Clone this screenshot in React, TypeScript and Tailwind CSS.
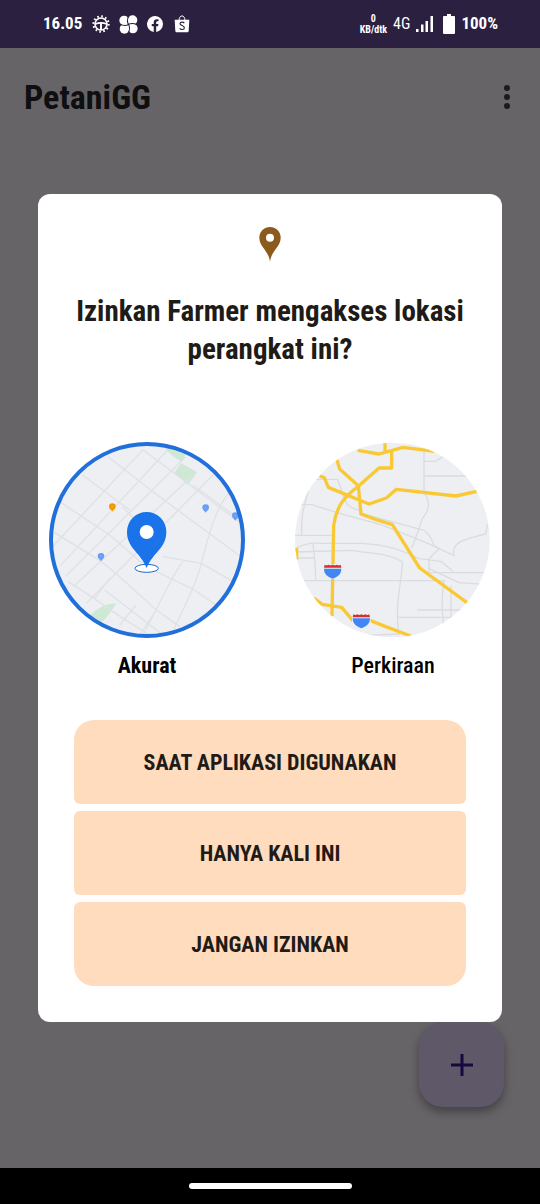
import { useState } from "react";

function GearIcon() {
  return (
    <svg viewBox="0 0 54 54" className="size-[18px]" fill="none" stroke="#fff" aria-hidden="true">
      <circle cx="27" cy="27" r="23" strokeWidth="6" strokeDasharray="5 7.040" />
      <circle cx="27" cy="27" r="18" strokeWidth="5" />
      <path d="M10 27q17-7 34 0" strokeWidth="5" />
      <path d="M27 25v20" strokeWidth="6" />
    </svg>
  );
}

function PinwheelIcon() {
  return (
    <svg viewBox="0 0 56 56" className="size-[19px]" aria-hidden="true">
      <g fill="#fff">
        <circle cx="15" cy="16" r="14" />
        <circle cx="40" cy="15" r="14" />
        <circle cx="41" cy="40" r="14" />
        <circle cx="16" cy="41" r="14" />
        <path d="M14 14h28v28H14z" />
      </g>
      <path
        d="M28 28C24 22 24 12 29 1M28 28C34 24 44 24 55 29M28 28C32 34 32 44 27 55M28 28C22 32 12 32 1 27"
        fill="none"
        stroke="#2b2040"
        strokeWidth="3"
      />
    </svg>
  );
}

function FacebookIcon() {
  return (
    <svg viewBox="0 0 24 24" className="size-4" fill="#fff" aria-hidden="true">
      <path d="M24 12a12 12 0 1 0-13.9 11.9v-8.4h-3V12h3V9.400c0-3 1.800-4.700 4.500-4.700 1.300 0 2.700.2 2.700.2v3h-1.500c-1.500 0-2 .9-2 1.900V12h3.400l-.6 3.500h-2.800v8.400A12 12 0 0 0 24 12Z" />
    </svg>
  );
}

function ShopIcon() {
  return (
    <svg viewBox="0 0 48 54" className="h-[18px] w-4" aria-hidden="true">
      <path d="M15 17c0-19 18-19 18 0" fill="none" stroke="#fff" strokeWidth="3" />
      <path d="M2 14h44l-2 34q-.5 4-4 4H8q-3.500 0-4-4Z" fill="#fff" />
      <path d="M31 24c-4-4-13-4-13 2s13 5 13 12-10 7-14 2" fill="none" stroke="#2b2040" strokeWidth="3.500" />
    </svg>
  );
}

function StatusBar() {
  return (
    <div className="flex h-12 items-center justify-between bg-[#2b2040] pr-[42px] pl-[43px] text-[17px] font-bold text-white">
      <div className="flex items-center gap-2.5">
        <span>16.05</span>
        <div className="flex items-center gap-[9px]">
          <GearIcon />
          <PinwheelIcon />
          <FacebookIcon />
          <span className="pl-0.5">
            <ShopIcon />
          </span>
        </div>
      </div>
      <div className="flex items-center gap-[6px]">
        <div className="text-center text-[10px] leading-[11px]">
          <div>0</div>
          <div>KB/dtk</div>
        </div>
        <span className="text-base font-normal">4G</span>
        <svg viewBox="0 0 17 16" className="h-4 w-[17px]" fill="#fff" aria-hidden="true">
          <path d="M0 13h2.500v3H0zM5 8.500h2.500V16H5zM9.500 5H12v11H9.500zM14.500 0H17v16h-2.500z" />
        </svg>
        <svg viewBox="0 0 12 20" className="ml-1 h-5 w-3" fill="#fff" aria-hidden="true">
          <path d="M4 0h4v2h3q1 0 1 1v16q0 1-1 1H1q-1 0-1-1V3q0-1 1-1h3Z" />
        </svg>
        <span>100%</span>
      </div>
    </div>
  );
}

function PoiPin({ x, y, color }: { x: number; y: number; color: string }) {
  return (
    <g transform={`translate(${x} ${y})`}>
      <path d="M0 13C-3 7-10 5-10-2a10 10 0 0 1 20 0C10 5 3 7 0 13Z" fill={color} />
      <circle cy="-2" r="3" fill="#fff" opacity=".15" />
    </g>
  );
}

function PreciseMap() {
  return (
    <svg viewBox="28 21 588 588" className="size-[196px]" aria-hidden="true">
      <clipPath id="precise-area">
        <circle cx="322" cy="315" r="286" />
      </clipPath>
      <g clipPath="url(#precise-area)">
        <rect x="28" y="21" width="588" height="588" fill="#edeff2" />
        <g fill="#cfe8d5">
          <path d="M376 42 402 65 427 80 440 50 410 30Z" />
          <path d="m424 84 48 28-27 38-41-36Z" />
          <path d="M150 543c25-25 45-36 80-38-11 20-23 36-44 56Z" />
        </g>
        <g fill="none" stroke="#dfe1e5" strokeWidth="4">
          <path d="M310 44 34 340M384 45 62 392M438 65 78 424M470 112 104 452M530 110 140 505M205 65 350 178 610 370" />
          <path d="M310 44 600 262M128 120 270 225M248 215 330 300M60 200 210 300 300 378 350 410 460 462 600 560" />
          <path d="M40 290 180 376 240 425 350 525 420 575M85 440 155 485 250 550 330 600M195 465 370 600" />
          <path d="M370 365 485 385 590 445M570 170C520 230 500 330 485 385 470 450 430 520 400 590M430 380C390 430 370 490 310 600M460 150 610 260M290 510 240 570M350 525 300 600M210 430 165 490" />
        </g>
        <PoiPin x={218} y={217} color="#f29900" />
        <PoiPin x={184} y={366} color="#669df6" />
        <PoiPin x={498} y={220} color="#669df6" />
        <PoiPin x={587} y={244} color="#669df6" />
      </g>
      <circle cx="322" cy="315" r="288" fill="none" stroke="#206fdb" strokeWidth="12" />
      <ellipse cx="321" cy="400" rx="35" ry="12" fill="#fff" stroke="#1967d2" strokeWidth="3" />
      <path d="M321 399C303 352 262 340 262 290a59 59 0 0 1 118 0C380 340 339 352 321 399Z" fill="#1a73e8" />
      <circle cx="321" cy="291" r="21" fill="#fff" />
    </svg>
  );
}

function RouteShield({ x, y }: { x: number; y: number }) {
  return (
    <g transform={`translate(${x} ${y})`}>
      <path d="M-28-20h56v44h-56z" fill="#edeff2" />
      <path d="M-24-19q6 4 12 0 6 4 12 0 6 4 12 0 6 4 12 0l2 9h-52Z" fill="#d93025" />
      <path d="M-26-7h52C26 10 14 17 0 23-14 17-26 10-26-7Z" fill="#4285f4" />
    </g>
  );
}

function ApproximateMap() {
  return (
    <svg viewBox="28 20 588 588" className="size-[196px]" aria-hidden="true">
      <clipPath id="approximate-area">
        <circle cx="320" cy="314" r="292" />
      </clipPath>
      <g clipPath="url(#approximate-area)">
        <rect x="28" y="20" width="588" height="588" fill="#edeff2" />
        <g fill="none" stroke="#dadce0" strokeWidth="4">
          <path d="M415 45V170C440 210 425 230 410 250 400 280 390 310 378 338M415 78h35l25-16M415 122h130M90 132h65c15 25 15 70 40 83l35 15M70 150C65 200 45 210 48 300M30 208h50c70 25 150 45 200 58l140 55 85 40c-10-45 40-50 95-65l6-30" />
          <path d="M230 235 415 285q20 15 30 45l15 10-30 30v40M28 300h112M28 340q40-20 70-16h130c80 5 120 20 170 45l70 10 35 30M28 350 200 345c50 10 120 10 150 35 0 60-25 120-10 220" />
          <path d="M28 368h57M82 325q8 60 8 110M28 436h450M430 412h180M430 400l90 42 90 6M475 435q-10 60-2 130M496 450v100M395 524h200M335 546h230M240 600l100-4" />
        </g>
        <g fill="none" stroke="#f9c935" strokeWidth="10" strokeLinejoin="round">
          <path d="m216 45 64 11 72-20 95 12M298 20v30M318 45v53h-38l-62 55q-35 25-52 52c-12 20-20 48-22 65l-5 272" />
          <path d="m154 74 8 27 56 50 8 85 46 17 48 15 82 130 142 104M102 121l14 6 12 29 122 50 52-18 30-26 179 20 62-14M84 488l26 19 58 9 38 45M240 550l60 24 75 28M33 338v35" />
        </g>
        <RouteShield x={141} y={407} />
        <RouteShield x={227} y={556} />
      </g>
    </svg>
  );
}

const answers = [
  { text: "SAAT APLIKASI DIGUNAKAN", shape: "rounded-t-[20px] rounded-b-[6px]" },
  { text: "HANYA KALI INI", shape: "rounded-[6px]" },
  { text: "JANGAN IZINKAN", shape: "rounded-t-[6px] rounded-b-[20px]" },
];

function PermissionDialog() {
  const [accuracy, setAccuracy] = useState("precise");
  return (
    <div
      role="dialog"
      aria-labelledby="permission-title"
      className="w-full rounded-xl bg-white pt-[33px] pb-9"
    >
      <svg viewBox="0 0 66 105" className="mx-auto h-[35px] w-[22px]" aria-hidden="true">
        <path
          fillRule="evenodd"
          d="M33 104C28 68 1 60 1 32a32 32 0 0 1 64 0C65 60 38 68 33 104ZM33 20a12 12 0 1 0 0 24 12 12 0 1 0 0-24Z"
          fill="#8c5a1a"
        />
      </svg>
      <h2
        id="permission-title"
        className="mt-[30px] px-8 text-center text-[29px] leading-[38px] font-bold text-[#1f1b16]"
      >
        Izinkan Farmer mengakses lokasi perangkat ini?
      </h2>
      <div className="mt-[74px] flex justify-between px-[11px] text-[22px] leading-8 text-black">
        <label className="relative flex flex-col items-center gap-3 font-bold">
          <input
            type="radio"
            name="accuracy"
            className="sr-only"
            checked={accuracy === "precise"}
            onChange={() => setAccuracy("precise")}
          />
          <PreciseMap />
          <span>Akurat</span>
        </label>
        <label className="relative flex flex-col items-center gap-3 font-medium">
          <input
            type="radio"
            name="accuracy"
            className="sr-only"
            checked={accuracy === "approximate"}
            onChange={() => setAccuracy("approximate")}
          />
          <ApproximateMap />
          <span>Perkiraan</span>
        </label>
      </div>
      <div className="mt-[38px] flex flex-col gap-[7px] px-9">
        {answers.map((answer) => (
          <button
            key={answer.text}
            type="button"
            className={`h-21 bg-[#ffdcbd] text-[22px] font-bold text-[#1f1b16] ${answer.shape}`}
          >
            {answer.text}
          </button>
        ))}
      </div>
    </div>
  );
}

export default function App() {
  return (
    <div className="flex min-h-screen flex-col bg-[#676467] font-['Liberation_Sans_Narrow','Roboto_Condensed','Open_Sans_Condensed','Liberation_Sans',sans-serif]">
      <StatusBar />
      <div className="relative flex flex-1 flex-col">
        <header className="flex h-[98px] items-center justify-between pr-[23px] pl-6">
          <h1 className="text-[34px] font-bold text-[#0f0e10]">PetaniGG</h1>
          <button type="button" aria-label="Menu" className="p-1.5">
            <svg viewBox="0 0 8 26" className="h-[26px] w-2" fill="#1c1a1f" aria-hidden="true">
              <circle cx="4" cy="4" r="3" />
              <circle cx="4" cy="13" r="3" />
              <circle cx="4" cy="22" r="3" />
            </svg>
          </button>
        </header>
        <button
          type="button"
          aria-label="Tambah"
          className="absolute right-9 bottom-[61px] flex size-[85px] items-center justify-center rounded-3xl bg-[#5f5868] shadow-[0_5px_10px_rgba(0,0,0,0.35)]"
        >
          <svg viewBox="0 0 22 22" className="size-[22px]" stroke="#180840" strokeWidth="3" aria-hidden="true">
            <path d="M11 0v22M0 11h22" />
          </svg>
        </button>
        <div className="absolute inset-0 flex items-center px-[38px]">
          <PermissionDialog />
        </div>
      </div>
      <div className="flex h-9 items-center justify-center bg-black">
        <div className="h-1.5 w-[163px] rounded-full bg-white" />
      </div>
    </div>
  );
}
